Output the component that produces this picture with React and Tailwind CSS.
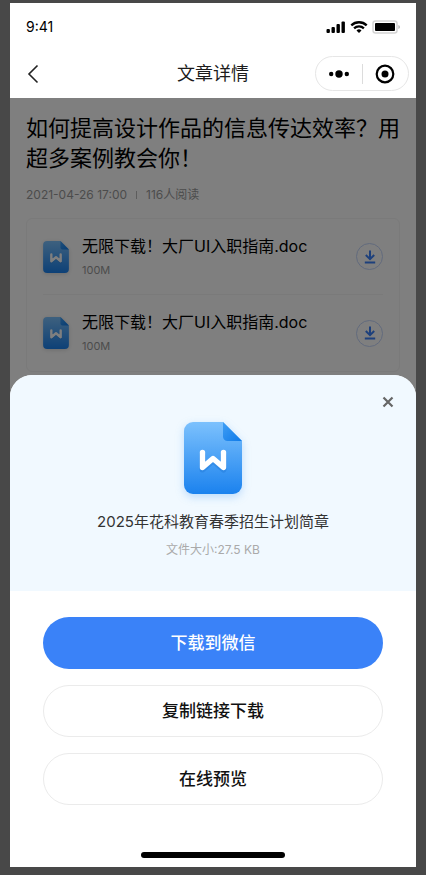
import { useId } from 'react';

const files = [
  { id: 1, name: '无限下载！大厂UI入职指南.doc', size: '100M' },
  { id: 2, name: '无限下载！大厂UI入职指南.doc', size: '100M' },
];

function DocIcon({ className }) {
  const id = useId();
  return (
    <svg viewBox="0 0 58 72" className={className} aria-hidden="true">
      <defs>
        <linearGradient id={`${id}body`} x1="0" y1="0" x2="0" y2="1">
          <stop offset="0" stopColor="#7cc1fd" />
          <stop offset="1" stopColor="#1b82ee" />
        </linearGradient>
        <linearGradient id={`${id}fold`} x1="0" y1="0" x2="1" y2="1">
          <stop offset="0" stopColor="#3f9ef5" />
          <stop offset="1" stopColor="#0f7ae8" />
        </linearGradient>
      </defs>
      <path d="M9 0H39L58 19V63A9 9 0 0 1 49 72H9A9 9 0 0 1 0 63V9A9 9 0 0 1 9 0Z" fill={`url(#${id}body)`} />
      <path d="M39 0L58 19H43.500A4.500 4.500 0 0 1 39 14.500Z" fill={`url(#${id}fold)`} />
      <path d="M18.500 30.500V45.500L29 36.500L39.500 45.500V30.500" transform="translate(0 2)" fill="none" stroke="#0d62c4" strokeOpacity="0.25" strokeWidth="6" strokeLinecap="round" strokeLinejoin="round" />
      <path d="M18.500 30.500V45.500L29 36.500L39.500 45.500V30.500" fill="none" stroke="#fff" strokeWidth="5.400" strokeLinecap="round" strokeLinejoin="round" />
    </svg>
  );
}

function StatusBar() {
  return (
    <div className="flex items-center justify-between pt-3 pr-4 pl-4">
      <span className="text-sm leading-6 text-black">9:41</span>
      <div className="flex items-center gap-1">
        <svg viewBox="0 0 20 12" className="h-3 w-5" aria-hidden="true">
          <rect x="0.500" y="8" width="3.400" height="4" rx="1" />
          <rect x="5.500" y="6" width="3.400" height="6" rx="1" />
          <rect x="10.500" y="3" width="3.400" height="9" rx="1" />
          <rect x="15.500" y="0.500" width="3.400" height="11.500" rx="1" />
        </svg>
        <svg viewBox="0 0 18 12" className="h-3 w-[18px]" fill="none" stroke="#000" strokeWidth="2.300" aria-hidden="true">
          <path d="M1.300 4.400A11 11 0 0 1 16.700 4.400" />
          <path d="M4.100 7.400A7 7 0 0 1 13.900 7.400" />
          <path d="M9 12L6.500 9.500A3.700 3.700 0 0 1 11.500 9.500Z" fill="#000" stroke="none" />
        </svg>
        <svg viewBox="0 0 28 14" className="h-[14px] w-7" aria-hidden="true">
          <rect x="1" y="1" width="24" height="12" rx="2.500" fill="#fff" stroke="#d4d4d4" strokeWidth="1.500" />
          <rect x="3" y="3" width="20" height="8" rx="1" />
          <path d="M26.500 5V9A2.200 2.200 0 0 0 26.500 5Z" fill="#a3a3a3" />
        </svg>
      </div>
    </div>
  );
}

function NavBar() {
  return (
    <div className="grid grid-cols-[1fr_auto_1fr] items-center px-[7px] pt-[17px] pb-[7px]">
      <button type="button" aria-label="返回" className="ml-2 flex h-8 w-8 items-center">
        <svg viewBox="0 0 16 20" className="h-5 w-4" fill="none" stroke="#222" strokeWidth="1.600" aria-hidden="true">
          <path d="M12.500 1.500L4 10L12.500 18.500" />
        </svg>
      </button>
      <h1 className="text-lg leading-7 text-[#1c1c1c]">文章详情</h1>
      <div className="flex h-[35px] w-[94px] items-center justify-self-end rounded-full border border-[#e6e6e6]">
        <button type="button" aria-label="更多" className="flex flex-1 justify-center">
          <svg viewBox="0 0 20 8" className="h-2 w-5" aria-hidden="true">
            <circle cx="2.200" cy="4" r="2.200" />
            <circle cx="10" cy="4" r="3.700" />
            <circle cx="17.800" cy="4" r="2.200" />
          </svg>
        </button>
        <span className="h-5 w-px bg-[#dcdcdc]" />
        <button type="button" aria-label="关闭小程序" className="flex flex-1 justify-center">
          <svg viewBox="0 0 20 20" className="h-5 w-5" aria-hidden="true">
            <circle cx="10" cy="10" r="8.300" fill="none" stroke="#000" strokeWidth="2.200" />
            <circle cx="10" cy="10" r="3.500" />
          </svg>
        </button>
      </div>
    </div>
  );
}

function FileRow({ file }) {
  return (
    <li className="flex h-[76px] items-center border-b border-[#f4f4f4] last:border-b-0">
      <DocIcon className="h-8 w-[26px] shrink-0 drop-shadow-sm" />
      <div className="ml-[13px] min-w-0 flex-1">
        <p className="text-base leading-6 text-black">{file.name}</p>
        <p className="mt-[2px] text-[11px] leading-5 text-[#999]">{file.size}</p>
      </div>
      <button type="button" aria-label={`下载 ${file.name}`} className="flex h-[27px] w-[27px] shrink-0 items-center justify-center rounded-full border border-[#c3d4fa]">
        <svg viewBox="0 0 12 14" className="h-[14px] w-3" fill="none" stroke="#3a80f8" strokeWidth="2" aria-hidden="true">
          <path d="M6 0.500V8.500M1.800 5L6 9.200L10.200 5M0.800 12.500H11.200" />
        </svg>
      </button>
    </li>
  );
}

function Article() {
  return (
    <article className="pt-[15px] pb-[3px] pl-4">
      <h2 className="text-[22px] leading-[30px] text-black">如何提高设计作品的信息传达效率？用超多案例教会你！</h2>
      <div className="mt-3 flex items-center text-xs leading-5 text-[#999]">
        <span>2021-04-26 17:00</span>
        <span className="mx-[9px] h-2 w-px bg-[#bbb]" />
        <span>116人阅读</span>
      </div>
      <ul className="mt-[13px] mr-4 rounded-md border border-[#f4f4f4] px-4">
        {files.map(file => <FileRow key={file.id} file={file} />)}
      </ul>
    </article>
  );
}

function DownloadSheet() {
  return (
    <section role="dialog" aria-label="下载文件" className="relative flex flex-1 flex-col overflow-hidden rounded-t-[22px] bg-white">
      <div className="flex flex-col items-center bg-[#f1f9ff] pt-[18px] pb-[29px]">
        <button type="button" aria-label="关闭" className="mr-[22px] flex h-[18px] w-3 items-center justify-center self-end">
          <svg viewBox="0 0 12 12" className="h-3 w-3" fill="none" stroke="#666" strokeWidth="2.200" aria-hidden="true">
            <path d="M1.500 1.500L10.500 10.500M10.500 1.500L1.500 10.500" />
          </svg>
        </button>
        <DocIcon className="mt-[11px] h-[72px] w-[58px] drop-shadow-[0_3px_4px_rgba(27,130,238,0.25)]" />
        <h3 className="mt-4 text-[15px] leading-6 text-[#333]">2025年花科教育春季招生计划简章</h3>
        <p className="mt-1 text-xs leading-6 text-[#aaa]">文件大小:27.5 KB</p>
      </div>
      <div className="flex flex-col gap-4 px-[33px] pt-[26px] text-[17px] leading-6">
        <button type="button" className="h-[52px] rounded-full bg-[#3a82f8] font-medium text-white">下载到微信</button>
        <button type="button" className="h-[52px] rounded-full border border-[#ebebeb] font-medium text-[#111]">复制链接下载</button>
        <button type="button" className="h-[52px] rounded-full border border-[#ebebeb] font-medium text-[#111]">在线预览</button>
      </div>
      <div className="mx-auto mt-auto mb-[9px] h-[6px] w-36 rounded-full bg-black" />
    </section>
  );
}

export default function App() {
  return (
    <div lang="zh-CN" className="flex min-h-screen flex-col bg-[#484848] px-[10px] pt-[3px] pb-2 font-[Inter,'Noto_Sans_CJK_SC',sans-serif]">
      <div className="flex flex-1 flex-col bg-white">
        <header>
          <StatusBar />
          <NavBar />
        </header>
        <main className="relative flex flex-1 flex-col bg-white">
          <Article />
          <div className="absolute inset-0 bg-black/50" />
          <DownloadSheet />
        </main>
      </div>
    </div>
  );
}
